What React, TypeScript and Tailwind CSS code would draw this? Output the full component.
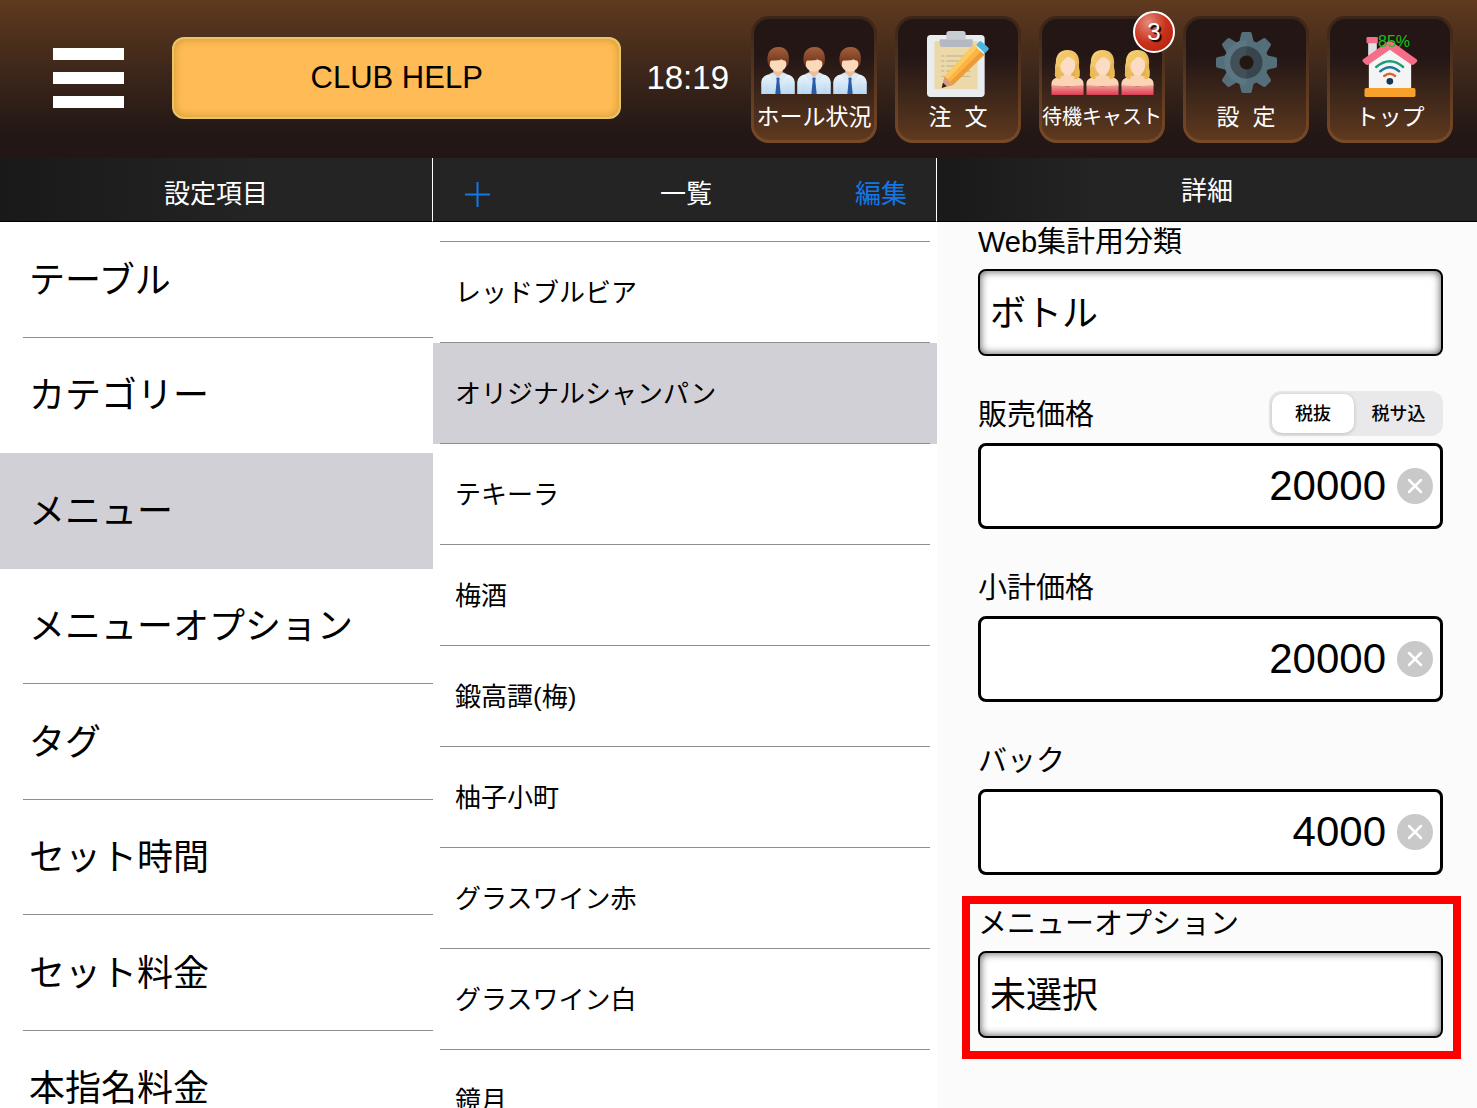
import { useState } from "react";
import type { ReactNode } from "react";
import clsx from "clsx";

const settings = [
    "テーブル",
    "カテゴリー",
    "メニュー",
    "メニューオプション",
    "タグ",
    "セット時間",
    "セット料金",
    "本指名料金",
];

const menus = [
    "レッドブルビア",
    "オリジナルシャンパン",
    "テキーラ",
    "梅酒",
    "鍛高譚(梅)",
    "柚子小町",
    "グラスワイン赤",
    "グラスワイン白",
    "鏡月",
];

const StaffIcon: React.FC = () => (
    <svg viewBox="0 0 100 149" className="h-[50px] w-[34px]" aria-hidden="true">
        <defs>
            <linearGradient id="shirt" x1="0" y1="0" x2="0" y2="1">
                <stop offset="0" stopColor="#f1f7fd" />
                <stop offset="1" stopColor="#b9d9f2" />
            </linearGradient>
            <linearGradient id="hair" x1="0" y1="0" x2="0" y2="1">
                <stop offset="0" stopColor="#a35f3b" />
                <stop offset="1" stopColor="#6d3319" />
            </linearGradient>
        </defs>
        <path d="M0 140V104Q2 86 24 81L40 76H60L76 81Q98 86 100 104V140Z" fill="url(#shirt)" />
        <path d="M36 66H64V82L50 93L36 82Z" fill="#efbd97" />
        <ellipse cx="50" cy="45" rx="27" ry="29" fill="#fbd9bb" />
        <path d="M20 50C14 20 26 0 52 0C77 0 87 20 81 52L76 55C76 47 74 43 70 40C64 39 60 37 57 34C57 36 58 37 59 39C47 41 34 40 28 41C26 45 26 50 25 55Z" fill="url(#hair)" />
        <path d="M35 76L50 90L39 100L24 81ZM65 76L50 90L61 100L76 81Z" fill="#dceaf6" stroke="#b5cce0" strokeWidth="1" />
        <path d="M45 92H55L54 101L58 140H42L46 101Z" fill="#2b5ba9" />
        <path d="M17 112V140M83 112V140" stroke="#b4d0e6" strokeWidth="1" />
    </svg>
);

const CastIcon: React.FC = () => (
    <svg viewBox="0 0 96 141" className="h-[47px] w-[33px]" aria-hidden="true">
        <defs>
            <linearGradient id="blond" x1="0" y1="0" x2="1" y2="1">
                <stop offset="0" stopColor="#f9d783" />
                <stop offset="1" stopColor="#dea540" />
            </linearGradient>
            <linearGradient id="dress" x1="0" y1="0" x2="0" y2="1">
                <stop offset="0" stopColor="#f6a09a" />
                <stop offset="1" stopColor="#d93e52" />
            </linearGradient>
        </defs>
        <path d="M48 0C24 0 13 16 13 38C8 52 13 60 10 73C12 86 24 89 34 84H64C75 89 87 84 84 72C87 61 80 54 83 40C84 16 72 0 48 0Z" fill="url(#blond)" />
        <path d="M0 108V98Q2 86 20 82L37 77V64H59V77L77 82Q94 86 96 98V108Z" fill="#fbd3b5" />
        <path d="M20 52C29 64 20 72 28 86C18 90 10 82 10 73C13 64 10 57 13 48ZM76 52C67 64 76 72 68 86C78 90 86 82 84 72C86 62 80 58 83 48Z" fill="#e9b955" />
        <path d="M26 43C26 28 35 20 49 20C63 20 71 30 71 44C71 62 60 75 48 75C36 75 26 62 26 43Z" fill="#fddcc5" />
        <path d="M19 48C17 24 30 8 48 8C67 8 77 24 77 48C73 36 66 28 50 19C40 28 31 32 26 48Z" fill="#f1c767" />
        <path d="M0 105Q48 112 96 105V135H0Z" fill="url(#dress)" />
    </svg>
);

const OrderIcon: React.FC = () => (
    <svg viewBox="0 0 186 198" className="h-[66px] w-[62px]" aria-hidden="true">
        <rect x="0" y="12" width="173" height="186" rx="11" fill="#e9edf0" />
        <rect x="22" y="30" width="130" height="145" rx="5" fill="#ecd9aa" />
        <path d="M38 25H137V40Q137 48 128 48H47Q38 48 38 40Z" fill="#b4b9c1" />
        <path d="M58 9Q58 0 67 0H107Q116 0 116 9V25H58Z" fill="#c9cdd3" />
        <path d="M43 75H52M58 75H130M43 90H52M58 90H130M43 105H52M58 105H130M43 120H52M58 120H130M43 136H52M58 136H130" stroke="#cdbb93" strokeWidth="4" />
        <path d="M139 42L172 71L78 162L44 171L53 136Z" fill="#fbb540" />
        <path d="M139 42L150 52L62 145L53 136Z" fill="#fdca62" />
        <path d="M161 62L172 71L78 162L69 153Z" fill="#ed9c36" />
        <path d="M53 136L78 162L44 171Z" fill="#d99c7c" />
        <path d="M48 155L59 166L44 171Z" fill="#27211f" />
        <path d="M148 42L155 33Q159 28 165 33L182 48Q188 53 183 58L174 67Z" fill="#4ab5dd" />
    </svg>
);

const GearIcon: React.FC = () => {
    const teeth = [0, 45, 90, 135, 180, 225, 270, 315];
    return (
        <svg viewBox="0 0 183 195" className="h-[65px] w-[61px]" aria-hidden="true">
            <g fill="#546e7a">
                <circle cx="91.5" cy="91.5" r="67" />
                {teeth.map((angle) => (
                    <path key={angle} d="M69 32L76 4Q77 0 81 0H102Q106 0 107 4L114 32Z" transform={`rotate(${angle} 91.5 91.5)`} />
                ))}
            </g>
            <path d="M91.500 24.500A67 67 0 0 0 91.500 158.500Z" fill="#5c7683" />
            <circle cx="91.500" cy="91.500" r="48" fill="#37464e" />
            <path d="M91.500 43.500A48 48 0 0 0 91.500 139.500Z" fill="#404f58" />
            <circle cx="91.500" cy="91.500" r="21" fill="#24170f" />
        </svg>
    );
};

const HomeIcon: React.FC = () => (
    <span className="relative">
        <svg viewBox="0 0 167 189" className="h-[63px] w-[56px]" aria-hidden="true">
            <path d="M18 24H44V60L18 80Z" fill="#dfe0e5" />
            <rect x="13" y="9" width="34" height="19" rx="3" fill="#f56d86" />
            <path d="M20 82L83 38L147 82V164H20Z" fill="#f3f4f6" />
            <path d="M72 26Q83 18 94 26L163 76Q167 80 164 84L156 91Q151 95 146 91L83 47L20 91Q15 95 10 91L2 83Q-1 79 4 75Z" fill="#f56d86" />
            <g fill="none" strokeWidth="7" strokeLinecap="round">
                <path d="M42 99Q83 64 123 99" stroke="#199c72" />
                <path d="M54 112Q83 87 111 112" stroke="#237592" />
                <path d="M66 126Q83 112 99 126" stroke="#dc652b" />
            </g>
            <circle cx="83" cy="142" r="10" fill="#173652" />
            <rect x="7" y="162" width="153" height="27" rx="5" fill="#f7a12c" />
        </svg>
        <span className="absolute left-4 top-0 text-base leading-4 text-[#18c21c]">85%</span>
    </span>
);

type NavButtonProps = {
    label: string;
    small?: boolean;
    badge?: number;
    children: ReactNode;
};

const NavButton: React.FC<NavButtonProps> = ({ label, small, badge, children }) => {
    return (
        <button type="button" className="relative h-[127px] w-[126px] rounded-[18px] bg-linear-to-b from-[#3a2419] to-[#7a4a26] p-[3px]">
            <span className="flex h-full flex-col items-center justify-end rounded-[15px] bg-linear-to-b from-[#231615] from-30% to-[#5f3a1e] pb-[7px]">
                <span className="flex items-end gap-[2px]">{children}</span>
                <span className={clsx("mt-1 whitespace-pre leading-8 text-white", small ? "text-[20px]" : "text-[23px]")}>{label}</span>
            </span>
            {badge && (
                <span className="absolute -right-[10px] -top-[5px] flex h-[42px] w-[42px] items-center justify-center rounded-full border-2 border-white bg-radial-[at_35%_25%] from-[#e58b7b] via-[#c9321d] to-[#b01c08] text-2xl text-white [text-shadow:2px_2px_1px_#000]">
                    {badge}
                </span>
            )}
        </button>
    );
};

const Header: React.FC = () => {
    return (
        <header className="flex items-center bg-linear-to-b from-[#5f3a1f] to-[#221715] to-85% pb-[15px] pl-[53px] pr-6 pt-4">
            <div className="mb-1 flex flex-1 items-center">
                <button type="button" aria-label="メニューを開く" className="flex w-[71px] flex-col gap-3">
                    <span className="h-3 w-full bg-white"></span>
                    <span className="h-3 w-full bg-white"></span>
                    <span className="h-3 w-full bg-white"></span>
                </button>
                <button type="button" className="ml-12 h-[82px] flex-1 rounded-xl border-2 border-[#e8c368] bg-[#ffbb55] pt-[2px] text-[31px] text-black shadow-[inset_0_0_8px_#c9992f]">
                    CLUB HELP
                </button>
                <time className="ml-[25px] mr-[22px] text-[33px] text-white">18:19</time>
            </div>

            <nav className="flex gap-[18px]">
                <NavButton label="ホール状況">
                    <StaffIcon />
                    <StaffIcon />
                    <StaffIcon />
                </NavButton>
                <NavButton label="注  文">
                    <OrderIcon />
                </NavButton>
                <NavButton label="待機キャスト" small badge={3}>
                    <CastIcon />
                    <CastIcon />
                    <CastIcon />
                </NavButton>
                <NavButton label="設  定">
                    <GearIcon />
                </NavButton>
                <NavButton label="トップ">
                    <HomeIcon />
                </NavButton>
            </nav>
        </header>
    );
};

const SettingList: React.FC = () => {
    const [selected, setSelected] = useState(2);

    return (
        <section className="flex min-h-0 min-w-0 flex-col">
            <h2 className="flex h-16 shrink-0 items-center justify-center border-b border-r border-b-black border-r-white bg-linear-to-r from-[#191919] to-[#242424] to-60% pt-[10px] text-[26px] text-white">
                設定項目
            </h2>
            <ul className="min-h-0 flex-1 overflow-y-auto bg-white [scrollbar-width:none]">
                {settings.map((name, i) => (
                    <li key={name} className={clsx("pl-[23px] odd:h-[116px] even:h-[115px]", i === selected && "bg-[#d1d0d7]")}>
                        <button
                            type="button"
                            onClick={() => setSelected(i)}
                            className={clsx(
                                "h-full w-full border-b pl-[6px] pt-[2px] text-left text-4xl",
                                i === selected || i === selected - 1 ? "border-transparent" : "border-[#8e8e8e]"
                            )}
                        >
                            {name}
                        </button>
                    </li>
                ))}
            </ul>
        </section>
    );
};

const MenuList: React.FC = () => {
    const [selected, setSelected] = useState(1);

    return (
        <section className="flex min-h-0 min-w-0 flex-col">
            <div className="grid h-16 shrink-0 grid-cols-[1fr_auto_1fr] items-center border-b border-r border-b-black border-r-white bg-[#242424] pl-8 pr-[29px] pt-[10px] text-[26px] text-[#1277e8]">
                <button type="button" aria-label="追加" className="justify-self-start">
                    <svg viewBox="0 0 25 25" className="h-[25px] w-[25px]" fill="none" stroke="currentColor" strokeWidth="2">
                        <path d="M12.500 0V25M0 12.500H25" />
                    </svg>
                </button>
                <h2 className="text-white">一覧</h2>
                <button type="button" className="justify-self-end">編集</button>
            </div>
            <ul className="min-h-0 flex-1 overflow-y-auto bg-white [scrollbar-width:none]">
                <li className="mx-[7px] h-5 border-b border-[#8e8e8e]"></li>
                {menus.map((name, i) => (
                    <li key={name} className={clsx("h-[101px] px-[7px]", i === selected && "bg-[#d1d0d7]")}>
                        <button
                            type="button"
                            onClick={() => setSelected(i)}
                            className="h-full w-full border-b border-[#8e8e8e] pl-[15px] pt-[2px] text-left text-[26px]"
                        >
                            {name}
                        </button>
                    </li>
                ))}
            </ul>
        </section>
    );
};

const SelectField: React.FC<{ id: string; label: string; value: string }> = ({ id, label, value }) => {
    return (
        <div>
            <label htmlFor={id} className="mb-[7px] block text-[29px] leading-10">{label}</label>
            <select
                id={id}
                className="h-[87px] w-full appearance-none rounded-lg border-2 border-black bg-white px-[10px] pt-[2px] text-4xl shadow-[inset_0_0_9px_#000000b0]"
            >
                <option>{value}</option>
            </select>
        </div>
    );
};

type PriceFieldProps = {
    id: string;
    label: string;
    initial: string;
    children?: ReactNode;
};

const PriceField: React.FC<PriceFieldProps> = ({ id, label, initial, children }) => {
    const [value, setValue] = useState(initial);

    return (
        <div>
            <div className="mb-[9px] flex h-[38px] items-center justify-between">
                <label htmlFor={id} className="text-[29px] leading-[38px]">{label}</label>
                {children}
            </div>
            <div className="flex h-[86px] items-center gap-[11px] rounded-lg border-3 border-black bg-white pr-[7px]">
                <input
                    id={id}
                    type="text"
                    inputMode="numeric"
                    value={value}
                    onChange={(e) => setValue(e.target.value)}
                    className="h-full min-w-0 flex-1 text-right text-[42px] outline-none"
                />
                <button
                    type="button"
                    aria-label="クリア"
                    onClick={() => setValue("")}
                    className="flex h-9 w-9 items-center justify-center rounded-full bg-[#c9c9c9]"
                >
                    <svg viewBox="0 0 16 16" className="h-4 w-4" stroke="#fff" strokeWidth="2.5" strokeLinecap="round">
                        <path d="M2 2L14 14M14 2L2 14" />
                    </svg>
                </button>
            </div>
        </div>
    );
};

const TaxSwitch: React.FC = () => {
    const [tax, setTax] = useState("税抜");

    return (
        <div role="radiogroup" aria-label="税区分" className="mb-[3px] grid h-[45px] w-[174px] shrink-0 grid-cols-[82px_1fr] rounded-xl bg-[#e9e9eb] py-[3px] pl-[3px]">
            {["税抜", "税サ込"].map((name) => (
                <label
                    key={name}
                    className={clsx(
                        "relative flex items-center justify-center rounded-[10px] text-lg font-medium",
                        tax === name && "bg-white shadow-[0_1px_4px_#00000030]"
                    )}
                >
                    <input
                        type="radio"
                        name="tax"
                        checked={tax === name}
                        onChange={() => setTax(name)}
                        className="sr-only"
                    />
                    {name}
                </label>
            ))}
        </div>
    );
};

const Detail: React.FC = () => {
    return (
        <section className="flex min-h-0 min-w-0 flex-col">
            <h2 className="flex h-16 shrink-0 items-center justify-center border-b border-black bg-linear-to-r from-[#191919] to-[#242424] to-30% pt-1 text-[26px] text-white">
                詳細
            </h2>
            <form className="min-h-0 flex-1 overflow-y-auto bg-[#fbfbfb] pl-[41px] pr-[34px] [scrollbar-width:none]">
                <div className="flex flex-col gap-10">
                    <SelectField id="category" label="Web集計用分類" value="ボトル" />
                    <PriceField id="price" label="販売価格" initial="20000">
                        <TaxSwitch />
                    </PriceField>
                    <PriceField id="subtotal" label="小計価格" initial="20000" />
                    <PriceField id="back" label="バック" initial="4000" />
                </div>

                <div className="-ml-4 -mr-[18px] mt-[21px] border-8 border-[#ff0000] pb-[13px] pl-2 pr-[10px]">
                    <SelectField id="option" label="メニューオプション" value="未選択" />
                </div>
            </form>
        </section>
    );
};

const App: React.FC = () => {
    return (
        <div className="flex h-screen flex-col overflow-hidden bg-white font-['Liberation_Sans','Noto_Sans_CJK_JP',sans-serif] text-black">
            <Header />
            <main className="grid min-h-0 flex-1 grid-cols-[433fr_504fr_540fr] grid-rows-1">
                <SettingList />
                <MenuList />
                <Detail />
            </main>
        </div>
    );
};

export default App;
